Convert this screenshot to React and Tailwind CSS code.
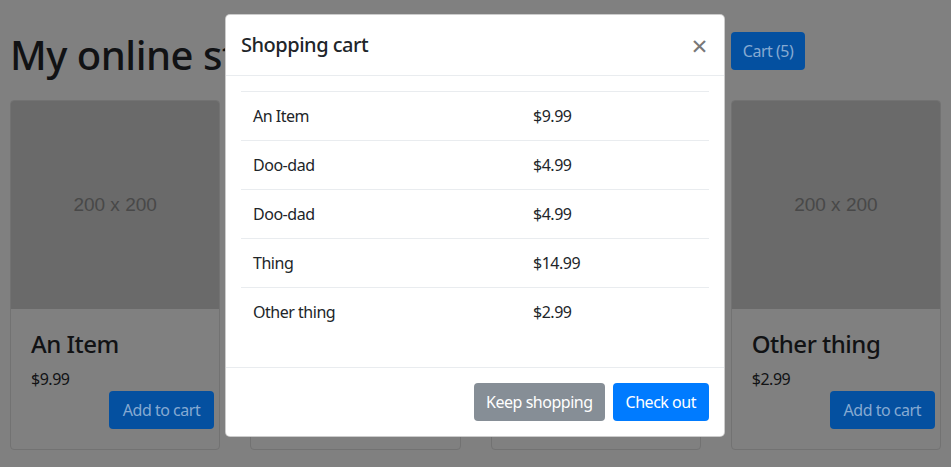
import React from "react";

const products = [
  { name: "An Item", price: "$9.99" },
  { name: "Doo-dad", price: "$4.99" },
  { name: "Thing", price: "$14.99" },
  { name: "Other thing", price: "$2.99" },
];

const cart = [
  { name: "An Item", price: "$9.99" },
  { name: "Doo-dad", price: "$4.99" },
  { name: "Doo-dad", price: "$4.99" },
  { name: "Thing", price: "$14.99" },
  { name: "Other thing", price: "$2.99" },
];

function Card({ p }) {
  return (
    <div className="border border-[#727272] rounded-[4px] bg-[#808080] overflow-hidden">
      <div className="h-[208px] bg-[#6a6a6a] flex items-center justify-center">
        <span className="font-['Liberation_Sans',sans-serif] tracking-normal text-[19px] text-[#484848]">200 x 200</span>
      </div>
      <div className="px-[20px] pt-[20px] pb-[20px]">
        <h5 className="text-[24px] leading-[29px] font-medium text-[#111214] mb-[9px]">{p.name}</h5>
        <p className="text-[16px] leading-[24px] text-[#111214]">{p.price}</p>
        <div className="flex justify-end -mr-[15px]">
          <button className="h-[38px] px-[14px] rounded-[4px] bg-[#0450a0] text-[#86aad2] text-[16px] leading-[24px]">
            Add to cart
          </button>
        </div>
      </div>
    </div>
  );
}

export default function App() {
  return (
    <div className="relative h-[467px] overflow-hidden bg-[#808080] font-['Noto_Sans',sans-serif] tracking-[-0.03em] text-[#212529]">
      <div className="px-[10px]">
        <div className="grid grid-cols-4 gap-[30px]">
          <h1 className="col-span-3 mt-[31px] text-[40px] leading-[48px] font-medium text-[#111214]">My online store</h1>
          <div className="mt-[32px]">
            <button className="h-[38px] px-[12px] rounded-[4px] bg-[#0450a0] text-[#86aad2] text-[16px] leading-[24px]">
              Cart (5)
            </button>
          </div>
        </div>
        <div className="grid grid-cols-4 gap-[30px] mt-[21px]">
          {products.map((p) => (
            <Card key={p.name} p={p} />
          ))}
        </div>
      </div>

      <div className="absolute left-[225px] top-[14px] w-[500px] bg-white border border-black/20 rounded-[5px]">
        <div className="flex items-center justify-between px-[15px] py-[15px] border-b border-[#e9ecef]">
          <h5 className="text-[20px] leading-[30px] font-medium text-[#212529]">Shopping cart</h5>
          <button className="text-[28px] leading-[28px] font-normal text-[#777777] mr-[2px]">×</button>
        </div>
        <div className="p-[15px]">
          <table className="w-full mb-[16px] border-collapse">
            <tbody>
              {cart.map((c, i) => (
                <tr key={i}>
                  <td className="w-[280px] px-[12px] py-[12px] border-t border-[#e9ecef] text-[16px] leading-[24px]">{c.name}</td>
                  <td className="px-[12px] py-[12px] border-t border-[#e9ecef] text-[16px] leading-[24px]">{c.price}</td>
                </tr>
              ))}
            </tbody>
          </table>
        </div>
        <div className="flex justify-end gap-[8px] px-[15px] py-[15px] border-t border-[#e9ecef]">
          <button className="h-[38px] px-[12px] rounded-[4px] bg-[#868e96] text-white text-[16px] leading-[24px]">
            Keep shopping
          </button>
          <button className="h-[38px] px-[13px] rounded-[4px] bg-[#007bff] text-white text-[16px] leading-[24px]">
            Check out
          </button>
        </div>
      </div>
    </div>
  );
}
